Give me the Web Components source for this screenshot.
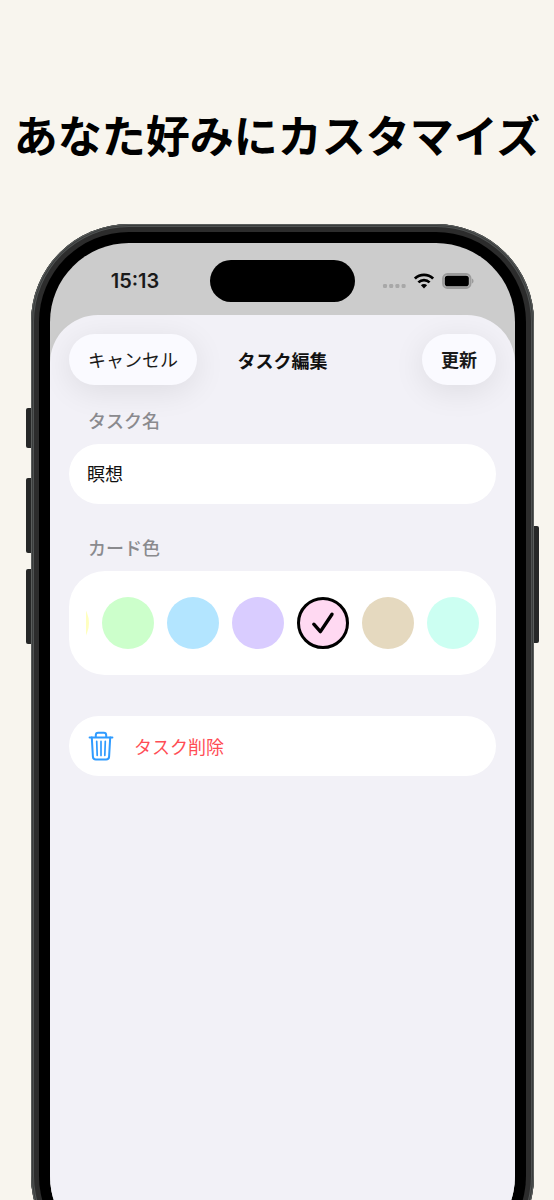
<!DOCTYPE html>
<html lang="ja">
<head>
<meta charset="utf-8">
<meta name="viewport" content="width=device-width, initial-scale=1">
<title>タスク編集</title>
<style>
  body {
    margin: 0;
    font-family: "Noto Sans CJK JP", sans-serif;
    color: #000;
  }
</style>
</head>
<body>
<promo-page>
  <span slot="headline">あなた好みにカスタマイズ</span>
  <phone-frame>
    <status-bar slot="status" time="15:13"></status-bar>
    <edit-sheet heading="タスク編集" cancel="キャンセル" confirm="更新">
      <text-field label="タスク名" value="瞑想"></text-field>
      <color-picker label="カード色"></color-picker>
      <delete-row>タスク削除</delete-row>
    </edit-sheet>
  </phone-frame>
</promo-page>

<script>
/** promo-page — headline + device, cut at the bottom of the window */
class PromoPage extends HTMLElement {
  constructor() {
    super()
    this.attachShadow({ mode: 'open' }).innerHTML = `
      <style>
        :host {
          display: block;
          box-sizing: border-box;
          height: 100vh;
          overflow: hidden;
          background: #f8f5ee;
          padding-top: 102px;
        }
        h1 {
          margin: 0 0 58px;
          font-size: 44px;
          line-height: 64px;
          font-weight: 700;
          text-align: center;
          white-space: nowrap;
        }
      </style>
      <h1><slot name="headline"></slot></h1>
      <slot></slot>
    `
  }
}

/** phone-frame — metal edge, bezel, side keys */
class PhoneFrame extends HTMLElement {
  constructor() {
    super()
    this.attachShadow({ mode: 'open' }).innerHTML = `
      <style>
        :host {
          display: block;
          position: relative;
          margin: 0 20px 0 31px;
          aspect-ratio: 503 / 1050;
        }
        * { box-sizing: border-box; }

        .edge {
          position: relative;
          height: 100%;
          padding: 8px;
          border-radius: 98px;
          background: #2c2c2c;
          box-shadow: inset 0 0 0 1px #5a5d5c, inset 0 0 0 2px #3a3c3c, inset 0 0 0 3px #4f5252;
        }
        .bezel {
          height: 100%;
          padding: 11px;
          border-radius: 90px;
          background: #000;
        }
        .screen {
          display: flex;
          flex-direction: column;
          height: 100%;
          border-radius: 79px;
          background: #ccc;
          overflow: hidden;
        }

        /* side keys */
        .key {
          position: absolute;
          width: 6px;
          background: #262727;
          border-radius: 2px 0 0 2px;
          left: -5px;
        }
        .action { top: 184px; height: 40px; }
        .up     { top: 254px; height: 75px; }
        .down   { top: 345px; height: 75px; }
        .power  { top: 302px; height: 117px; left: auto; right: -5px; border-radius: 0 2px 2px 0; }
      </style>
      <div class="key action"></div>
      <div class="key up"></div>
      <div class="key down"></div>
      <div class="key power"></div>
      <div class="edge">
        <div class="bezel">
          <div class="screen">
            <slot name="status"></slot>
            <slot></slot>
          </div>
        </div>
      </div>
    `
  }
}

/** status-bar — time, island, signal / wifi / battery */
class StatusBar extends HTMLElement {
  connectedCallback() {
    this.attachShadow({ mode: 'open' }).innerHTML = `
      <style>
        :host {
          display: grid;
          box-sizing: border-box;
          grid-template-columns: 1fr 145px 1fr;
          align-items: center;
          height: 72px;
          padding-top: 4px;
        }
        time {
          justify-self: center;
          padding-left: 10px;
          font: 600 20px/24px Inter, sans-serif;
          color: #1a1a1a;
        }
        .island {
          height: 42px;
          border-radius: 21px;
          background: #000;
        }
        .icons {
          display: flex;
          align-items: center;
          justify-content: flex-end;
          gap: 8px;
          padding-right: 41px;
        }
        svg { display: block; flex: none; }
      </style>
      <time>${this.getAttribute('time')}</time>
      <div class="island"></div>
      <div class="icons">
        <svg width="24" height="16" viewBox="0 0 24 16" fill="#a8a8a8">
          <rect x="1" y="11" width="4" height="4" rx="1.2"/>
          <rect x="7.2" y="11" width="4" height="4" rx="1.2"/>
          <rect x="13.4" y="11" width="4" height="4" rx="1.2"/>
          <rect x="19.6" y="11" width="4" height="4" rx="1.2"/>
        </svg>
        <svg width="20" height="16" viewBox="0 0 20 16" fill="none" stroke="#000" stroke-width="2.7">
          <path d="M.9 5.6a13 13 0 0 1 18.2 0"/>
          <path d="M4.4 9.4a8 8 0 0 1 11.2 0"/>
          <path d="M10 15.4 6.9 12.3a4.4 4.4 0 0 1 6.2 0z" fill="#000" stroke="none"/>
        </svg>
        <svg width="32" height="16" viewBox="0 0 32 16">
          <rect x="1" y="1" width="27.6" height="14" rx="4.4" fill="#b8b8b8" stroke="#9b9b9b" stroke-width="1.8"/>
          <rect x="2.8" y="2.8" width="24" height="10.4" rx="2.8" fill="#000"/>
          <path d="M30 5.6a2.6 2.6 0 0 1 0 4.8z" fill="#9b9b9b"/>
        </svg>
      </div>
    `
  }
}

/** edit-sheet — modal sheet with cancel / title / confirm */
class EditSheet extends HTMLElement {
  connectedCallback() {
    this.attachShadow({ mode: 'open' }).innerHTML = `
      <style>
        :host {
          display: block;
          flex: 1;
          padding: 19px;
          border-radius: 48px 48px 0 0;
          background: #f2f1f7;
        }
        header {
          display: grid;
          grid-template-columns: 1fr auto 1fr;
          align-items: center;
          margin-bottom: 23px;
        }
        h2 {
          margin: 0;
          font-size: 18px;
          line-height: 24px;
          font-weight: 700;
          color: #111;
        }
        button {
          justify-self: start;
          height: 51px;
          padding: 0 19px 2px;
          border: 0;
          border-radius: 26px;
          background: #fafaff;
          box-shadow: 0 6px 32px rgba(0, 0, 0, 0.09);
          font: 400 18px/24px "Noto Sans CJK JP", sans-serif;
          color: #1a1a1a;
        }
        .confirm { justify-self: end; font-weight: 700; }
      </style>
      <header>
        <button type="button">${this.getAttribute('cancel')}</button>
        <h2>${this.getAttribute('heading')}</h2>
        <button type="button" class="confirm">${this.getAttribute('confirm')}</button>
      </header>
      <slot></slot>
    `
  }
}

/** text-field — section label + rounded input */
class TextField extends HTMLElement {
  connectedCallback() {
    this.attachShadow({ mode: 'open' }).innerHTML = `
      <style>
        :host { display: block; margin-bottom: 31px; }
        label {
          display: block;
          margin: 0 19px 12px;
          font-size: 18px;
          line-height: 24px;
          font-weight: 500;
          color: #8a8a8e;
        }
        input {
          display: block;
          box-sizing: border-box;
          width: 100%;
          height: 60px;
          padding: 0 18px 2px;
          border: 0;
          border-radius: 30px;
          background: #fff;
          font: 400 18px/24px "Noto Sans CJK JP", sans-serif;
          color: #111;
        }
      </style>
      <label for="name">${this.getAttribute('label')}</label>
      <input id="name" type="text" value="${this.getAttribute('value')}">
    `
  }
}

/** color-picker — one row of swatches, scrolled to its end */
const COLORS = [
  { name: 'イエロー', value: '#ffffbf' },
  { name: 'グリーン', value: '#ccffcb' },
  { name: 'ブルー', value: '#b3e5ff' },
  { name: 'パープル', value: '#d9ccff' },
  { name: 'ピンク', value: '#ffd9f2', checked: true },
  { name: 'ベージュ', value: '#e5d9bf' },
  { name: 'ミント', value: '#ccfff2' }
]

class ColorPicker extends HTMLElement {
  connectedCallback() {
    this.attachShadow({ mode: 'open' }).innerHTML = `
      <style>
        :host { display: block; margin-bottom: 41px; }
        .label {
          margin: 0 19px 12px;
          font-size: 18px;
          line-height: 24px;
          font-weight: 500;
          color: #8a8a8e;
        }
        .card {
          padding: 26px 17px;
          border-radius: 36px;
          background: #fff;
        }
        .row {
          display: flex;
          justify-content: flex-end;
          gap: 13px;
          overflow: hidden;
        }
        label { display: grid; flex: none; place-items: center; }
        input, svg { grid-area: 1 / 1; }
        input {
          appearance: none;
          width: 52px;
          height: 52px;
          margin: 0;
          border-radius: 50%;
          background: var(--swatch);
        }
        input:checked { border: 3px solid #000; }
        svg { display: none; pointer-events: none; }
        input:checked + svg { display: block; }
      </style>
      <div class="label" id="title">${this.getAttribute('label')}</div>
      <div class="card">
        <div class="row" role="radiogroup" aria-labelledby="title">
          ${COLORS.map(c => `
            <label>
              <input type="radio" name="color" aria-label="${c.name}" style="--swatch: ${c.value}" ${c.checked ? 'checked' : ''}>
              <svg width="24" height="24" viewBox="0 0 24 24" fill="none" stroke="#000" stroke-width="3.4" stroke-linecap="round" stroke-linejoin="round">
                <path d="M2.8 13.2 9.4 20.6 21 3.2"/>
              </svg>
            </label>`).join('')}
        </div>
      </div>
    `
  }
}

/** delete-row — destructive action with trash icon */
class DeleteRow extends HTMLElement {
  constructor() {
    super()
    this.attachShadow({ mode: 'open' }).innerHTML = `
      <style>
        :host { display: block; }
        button {
          display: flex;
          align-items: center;
          gap: 20px;
          width: 100%;
          height: 60px;
          padding: 0 19px;
          border: 0;
          border-radius: 30px;
          background: #fff;
          font: 400 18px/24px "Noto Sans CJK JP", sans-serif;
          color: #ff4d55;
        }
      </style>
      <button type="button">
        <svg width="26" height="30" viewBox="0 0 26 30" fill="none" stroke="#2f9bff" stroke-width="2" stroke-linecap="round" stroke-linejoin="round">
          <path d="M1.6 6.4h22.8"/>
          <path d="M7.8 6V4.2a2.4 2.4 0 0 1 2.4-2.4h5.6a2.4 2.4 0 0 1 2.4 2.4V6"/>
          <path d="M3.8 6.6l1.1 19a3 3 0 0 0 3 2.8h10.2a3 3 0 0 0 3-2.8l1.1-19"/>
          <path d="M8.7 10.4l.5 14M13 10.4v14M17.3 10.4l-.5 14" stroke-width="1.7"/>
        </svg>
        <slot></slot>
      </button>
    `
  }
}

customElements.define('promo-page', PromoPage)
customElements.define('phone-frame', PhoneFrame)
customElements.define('status-bar', StatusBar)
customElements.define('edit-sheet', EditSheet)
customElements.define('text-field', TextField)
customElements.define('color-picker', ColorPicker)
customElements.define('delete-row', DeleteRow)
</script>
</body>
</html>
